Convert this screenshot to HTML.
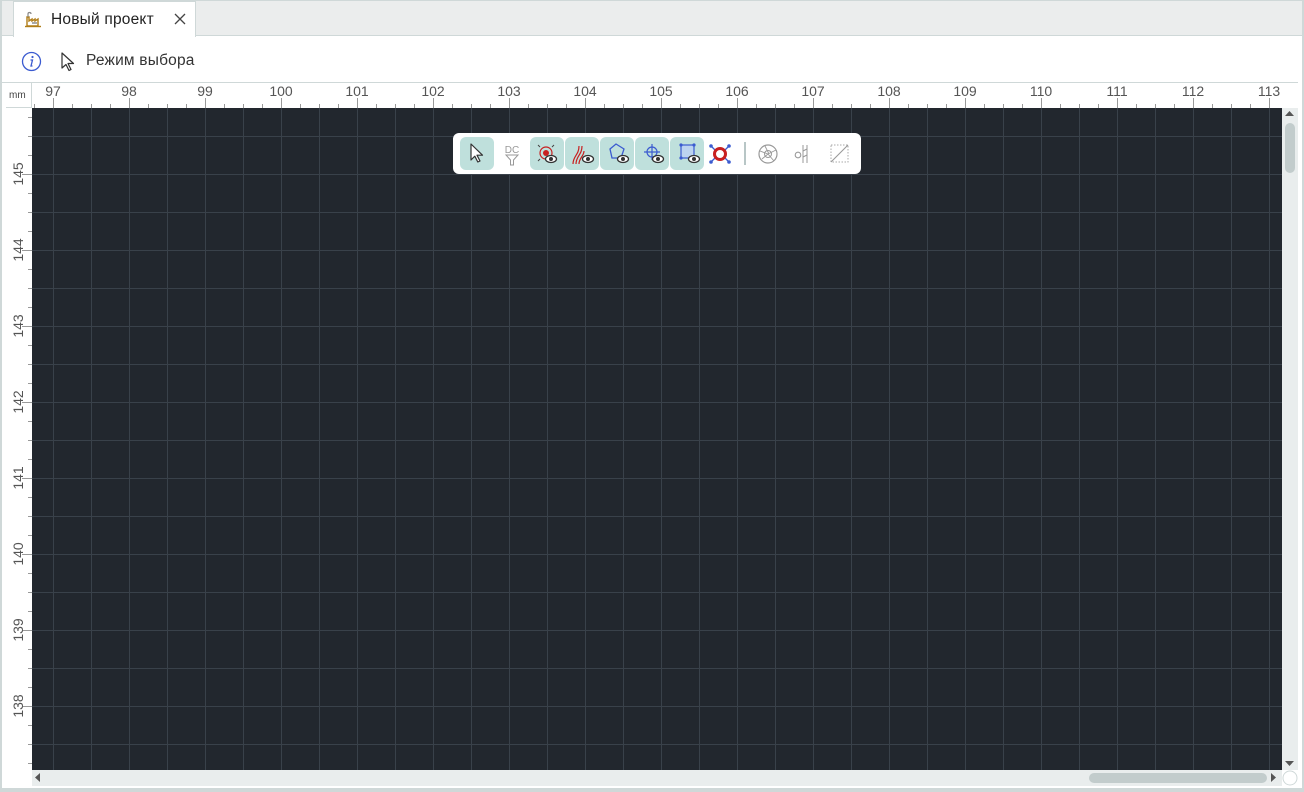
<!DOCTYPE html>
<html><head><meta charset="utf-8"><style>
*{margin:0;padding:0;box-sizing:border-box}
body{width:1304px;height:792px;overflow:hidden;background:#fff;font-family:"Liberation Sans",sans-serif;position:relative}
.frame{position:absolute;left:0;top:0;width:1304px;height:792px;border:2px solid #cfd8d8;border-top:1px solid #cfd8d8;border-bottom:4px solid #cfd8d8;pointer-events:none}
.tabbar{position:absolute;left:0;top:0;width:1304px;height:36px;background:#ebeded;border-bottom:1px solid #cfd8d8}
.tab{position:absolute;left:13px;top:1px;width:183px;height:36px;background:#fff;border:1px solid #cfd8d8;border-bottom:none}
.tab span{position:absolute;left:37px;top:9px;font-size:15.5px;color:#222;letter-spacing:0.2px}
.ttl{position:absolute;left:86px;top:52px;font-size:15.5px;color:#333;letter-spacing:0.2px}
.lbl{position:absolute;font-size:14px;color:#555;top:83px;transform:translateX(-50%)}
.vl{position:absolute;font-size:14px;color:#555;left:18px;transform:translate(-50%,-50%) rotate(-90deg)}
</style></head><body>
<div class="tabbar"></div>
<div class="tab">
<svg style="position:absolute;left:10px;top:8px" width="18" height="18" viewBox="0 0 18 18"><path d="M3 16V7h2v4l3-2v2l3-2v2l3-2v7z" fill="none" stroke="#b07d18" stroke-width="1.4"/><path d="M1 16.5h16" stroke="#b07d18" stroke-width="1.4"/><path d="M4 7V4c0-2 3-2 3 0" fill="none" stroke="#888" stroke-width="1.2"/><path d="M8 13h5" stroke="#555" stroke-width="1"/></svg>
<span>Новый проект</span>
<svg style="position:absolute;left:160px;top:11px" width="12" height="12" viewBox="0 0 12 12"><path d="M1 1L11 11M11 1L1 11" stroke="#444" stroke-width="1.3"/></svg>
</div>
<svg style="position:absolute;left:21px;top:51px" width="21" height="21" viewBox="0 0 21 21"><circle cx="10.5" cy="10.5" r="9" fill="none" stroke="#3b5bd0" stroke-width="1.3"/><circle cx="11.5" cy="6" r="1.1" fill="#3b5bd0"/><path d="M9.5 9h2l-1.5 6h1.5" fill="none" stroke="#3b5bd0" stroke-width="1.3"/></svg>
<svg style="position:absolute;left:60px;top:52px" width="16" height="20" viewBox="0 0 16 20"><path d="M2 1v15l4-3.5 3 6 2-1-3-6h5.5z" fill="none" stroke="#333" stroke-width="1.2" stroke-linejoin="round"/></svg>
<div class="ttl">Режим выбора</div>
<div style="position:absolute;left:0;top:82px;width:1298px;height:1px;background:#cfd8d8"></div>
<div style="position:absolute;left:9px;top:90px;font-size:10px;color:#444">mm</div>
<div style="position:absolute;left:6px;top:107px;width:26px;height:1px;background:#cfd8d8"></div>
<div style="position:absolute;left:31px;top:82px;width:1px;height:26px;background:#cfd8d8"></div>
<svg style="position:absolute;left:0;top:0" width="1304" height="792">
<defs>
<pattern id="g" patternUnits="userSpaceOnUse" x="15" y="22" width="38" height="38"><path d="M0.5 0V38M0 0.5H38" stroke="#39414a" stroke-width="1"/></pattern>
<pattern id="tt" patternUnits="userSpaceOnUse" x="34" y="0" width="19" height="10"><path d="M0.5 6V10" stroke="#999"/></pattern>
<pattern id="tM" patternUnits="userSpaceOnUse" x="53" y="0" width="76" height="10"><path d="M0.5 0V10" stroke="#999"/></pattern>
<pattern id="lt" patternUnits="userSpaceOnUse" x="0" y="136" width="10" height="19"><path d="M6 0.5H10" stroke="#999"/></pattern>
<pattern id="lM" patternUnits="userSpaceOnUse" x="0" y="174" width="10" height="76"><path d="M0 0.5H10" stroke="#999"/></pattern>
</defs>
<rect x="32" y="108" width="1250" height="662" fill="#22272e"/>
<rect x="32" y="108" width="1250" height="662" fill="url(#g)"/>
<g transform="translate(0,98)"><rect x="32" y="0" width="1250" height="10" fill="url(#tt)"/><rect x="32" y="0" width="1250" height="10" fill="url(#tM)"/></g>
<g transform="translate(22,0)"><rect x="0" y="108" width="10" height="662" fill="url(#lt)"/><rect x="0" y="108" width="10" height="662" fill="url(#lM)"/></g>
<rect x="1282" y="108" width="16" height="662" fill="#e9eded"/>
<path d="M1285 116h9l-4.5-5z" fill="#555"/>
<path d="M1285 761h9l-4.5 5z" fill="#555"/>
<rect x="1285" y="123" width="10" height="50" rx="5" fill="#c2cccc"/>
<rect x="32" y="770" width="1250" height="16" fill="#e9eded"/>
<path d="M40 773v9l-5-4.5z" fill="#555"/>
<path d="M1271 773v9l5-4.5z" fill="#555"/>
<rect x="1089" y="773" width="178" height="10" rx="5" fill="#c2cccc"/>
<circle cx="1290" cy="778" r="7" fill="#fff" stroke="#cfd8d8"/>
</svg>
<div class="lbl" style="left:53px">97</div><div class="lbl" style="left:129px">98</div><div class="lbl" style="left:205px">99</div><div class="lbl" style="left:281px">100</div><div class="lbl" style="left:357px">101</div><div class="lbl" style="left:433px">102</div><div class="lbl" style="left:509px">103</div><div class="lbl" style="left:585px">104</div><div class="lbl" style="left:661px">105</div><div class="lbl" style="left:737px">106</div><div class="lbl" style="left:813px">107</div><div class="lbl" style="left:889px">108</div><div class="lbl" style="left:965px">109</div><div class="lbl" style="left:1041px">110</div><div class="lbl" style="left:1117px">111</div><div class="lbl" style="left:1193px">112</div><div class="lbl" style="left:1269px">113</div>
<div class="vl" style="top:174px">145</div><div class="vl" style="top:250px">144</div><div class="vl" style="top:326px">143</div><div class="vl" style="top:402px">142</div><div class="vl" style="top:478px">141</div><div class="vl" style="top:554px">140</div><div class="vl" style="top:630px">139</div><div class="vl" style="top:706px">138</div>
<div style="position:absolute;left:453px;top:133px;width:408px;height:41px;background:#fff;border-radius:6px"></div>
<svg style="position:absolute;left:453px;top:133px" width="408" height="41" viewBox="0 0 408 41">
<defs><g id="eye"><ellipse cx="0" cy="0" rx="5.5" ry="3.5" fill="#fff" stroke="#333" stroke-width="1.3"/><circle cx="0" cy="0" r="2" fill="#333"/></g></defs>
<g fill="#bfe0dc"><rect x="7" y="4" width="34" height="33" rx="6"/><rect x="77" y="4" width="34" height="33" rx="6"/><rect x="112" y="4" width="34" height="33" rx="6"/><rect x="147" y="4" width="34" height="33" rx="6"/><rect x="182" y="4" width="34" height="33" rx="6"/><rect x="217" y="4" width="34" height="33" rx="6"/></g>
<path d="M18 11v16l3.8-3.8 3 5.8 2.2-1-3-5.8h5.5z" fill="#fff" stroke="#333" stroke-width="1.2" stroke-linejoin="round"/>
<text x="59" y="20" font-size="10" fill="#999" text-anchor="middle" font-family="Liberation Sans">DC</text>
<path d="M53 22h12l-4.5 5v5h-3v-5z" fill="none" stroke="#999" stroke-width="1"/>
<circle cx="93" cy="20" r="3" fill="#c82020"/><circle cx="93" cy="20" r="6" fill="none" stroke="#c82020" stroke-width="1.2"/>
<path d="M85 12l2 2M101 12l-2 2M85 28l2-2" stroke="#444" stroke-width="1"/>
<use href="#eye" x="98" y="26"/>
<path d="M120 31c0-8 6-9 6-18M123 31c0-8 6-9 6-18M126 31c0-6 5-8 5-13" fill="none" stroke="#c82020" stroke-width="1.2"/>
<use href="#eye" x="135" y="26"/>
<path d="M163 11l8 5-3 9h-9l-2-9z" fill="none" stroke="#3b5bd0" stroke-width="1.3"/>
<use href="#eye" x="170" y="26"/>
<circle cx="199" cy="19" r="5" fill="none" stroke="#3b5bd0" stroke-width="1.2"/><path d="M191 19h16M199 11v16" stroke="#3b5bd0" stroke-width="1.2"/>
<use href="#eye" x="205" y="26"/>
<rect x="228" y="12" width="13" height="13" fill="#bcd3f0" stroke="#3b5bd0" stroke-width="1.2"/>
<g fill="#3b5bd0"><circle cx="228" cy="12" r="1.6"/><circle cx="241" cy="12" r="1.6"/><circle cx="228" cy="25" r="1.6"/><circle cx="241" cy="25" r="1.6"/></g>
<use href="#eye" x="241" y="26"/>
<path d="M258 13l4 4M276 13l-4 4M258 29l4-4M276 29l-4-4" stroke="#3b5bd0" stroke-width="1.3"/>
<g fill="#3b5bd0"><circle cx="258" cy="13" r="1.8"/><circle cx="276" cy="13" r="1.8"/><circle cx="258" cy="29" r="1.8"/><circle cx="276" cy="29" r="1.8"/></g>
<circle cx="267" cy="21" r="5.5" fill="#fff" stroke="#c82020" stroke-width="3"/>
<rect x="291" y="9" width="2" height="23" fill="#b8c6c6"/>
<circle cx="315" cy="21" r="9" fill="none" stroke="#999" stroke-width="1.2"/><circle cx="315" cy="21" r="3.5" fill="none" stroke="#999" stroke-width="1"/>
<path d="M312 13l4 8M323 17l-8 4M321 28l-6-7M309 26l6-5M307 18l8 3" stroke="#999" stroke-width="0.9"/>
<circle cx="345" cy="22" r="2.8" fill="none" stroke="#999" stroke-width="1.1"/><path d="M350 12v18M354 12v18M350 18l4-2M350 24l4-2" stroke="#999" stroke-width="1"/>
<rect x="378" y="12" width="17" height="17" fill="none" stroke="#aaa" stroke-width="1" stroke-dasharray="1.5 1.5"/><path d="M378 29L395 12" stroke="#999" stroke-width="1.1"/>
</svg>
<div class="frame"></div>
</body></html>
